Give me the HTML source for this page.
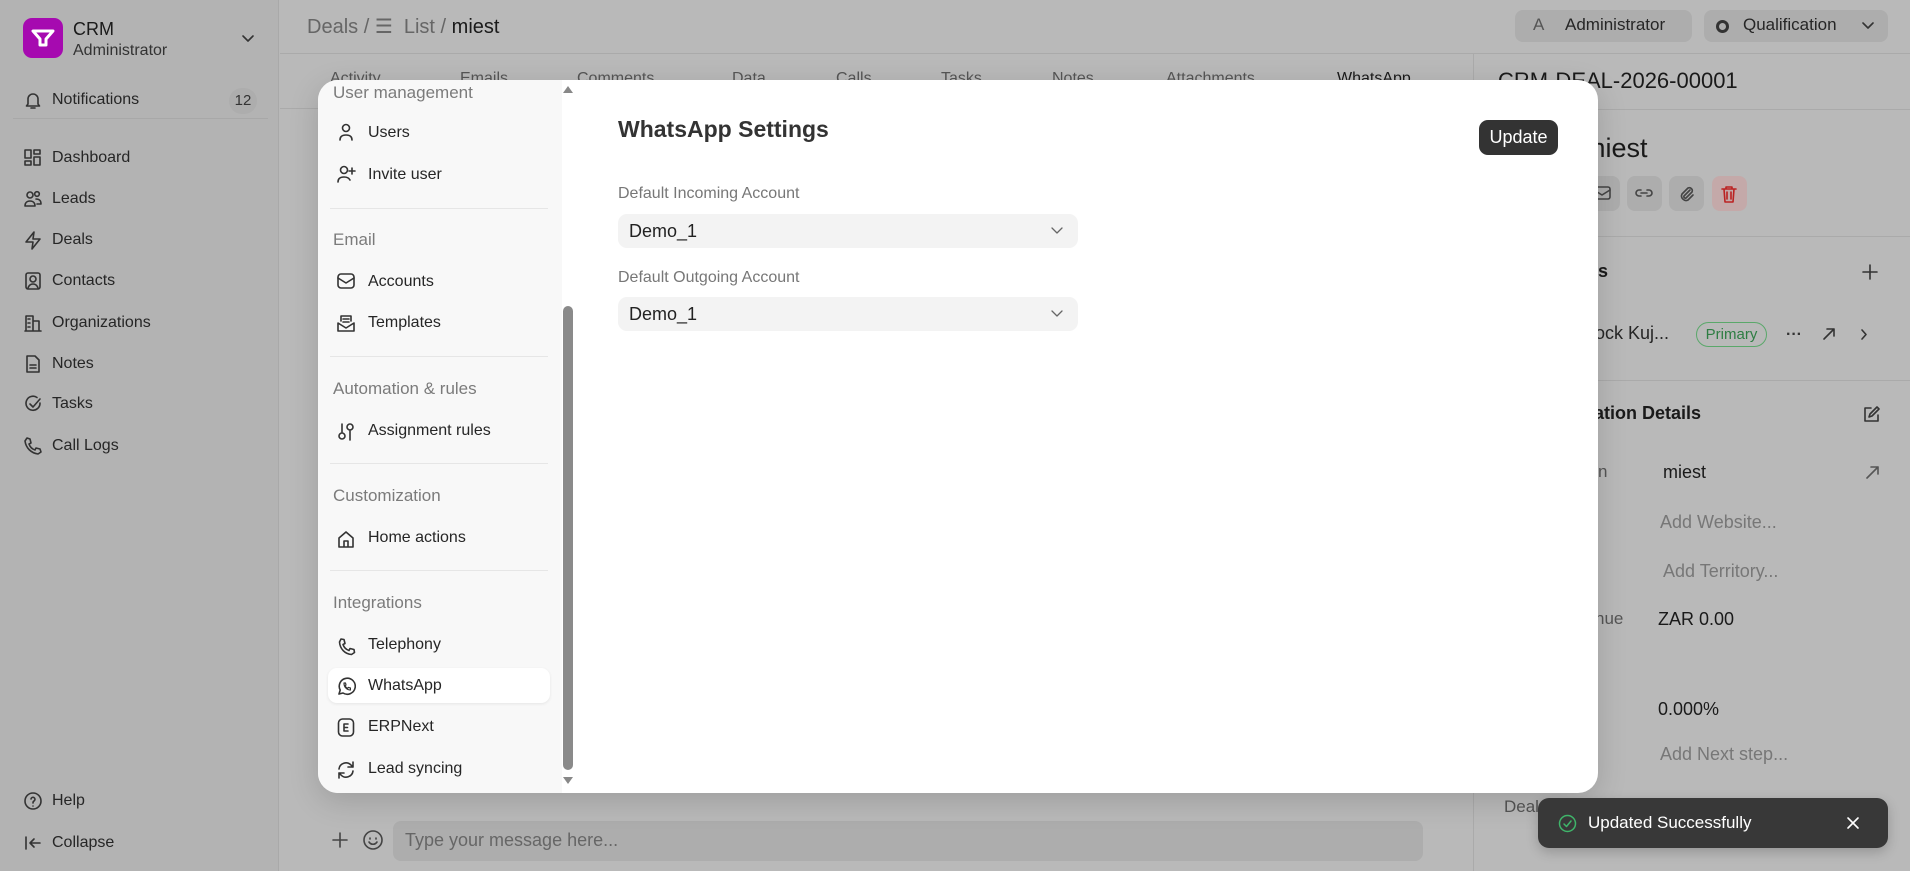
<!DOCTYPE html>
<html><head><meta charset="utf-8">
<style>
*{box-sizing:border-box;margin:0;padding:0}
body{width:1910px;height:871px;overflow:hidden;background:#b9b9b9;font-family:"Liberation Sans",sans-serif;color:#1f1f1f;position:relative}
.abs{position:absolute;white-space:nowrap}
svg{display:block}
.ic{position:absolute;fill:none;stroke:#333;stroke-width:1.6;stroke-linecap:round;stroke-linejoin:round}
.side{position:absolute;left:0;top:0;width:279px;height:871px;background:#b3b3b3;border-right:1px solid #a9a9a9}
.sn{font-size:16px;color:#262626}
.nav{position:absolute;left:318px;top:80px;width:244px;height:713px;background:#f8f8f8;border-radius:20px 0 0 20px;overflow:hidden}
.mi{font-size:16px;color:#262626}
.sec{font-size:17px;color:#7b7b7b}
.dv{position:absolute;left:12px;width:218px;height:1px;background:#e6e6e6}
.g{color:#777}
</style></head><body>
<div class="side">
  <div class="abs" style="left:23px;top:18px;width:40px;height:40px;border-radius:9px;background:#a60ab0"></div>
  <svg class="ic" style="left:31px;top:28px;stroke:#fff;stroke-width:3" width="24" height="20" viewBox="0 0 24 20"><path d="M2 3h20l-7 8v6h-6v-6z"/></svg>
  <div class="abs" style="left:73px;top:19px;font-size:18px;color:#1a1a1a">CRM</div>
  <div class="abs" style="left:73px;top:42px;font-size:16px;color:#333">Administrator</div>
  <svg class="ic" style="left:241px;top:34px" width="14" height="9" viewBox="0 0 14 9"><path d="M2 2l5 5 5-5"/></svg>
  <svg class="ic" style="left:23px;top:90px" width="20" height="20" viewBox="0 0 20 20"><path d="M5 14V9a5 5 0 0110 0v5l1.5 2h-13zM8 18h4"/></svg>
  <div class="abs sn" style="left:52px;top:91px">Notifications</div>
  <div class="abs" style="left:229px;top:88px;width:28px;height:26px;border-radius:13px;background:#adadad;font-size:15px;text-align:center;line-height:26px;color:#333">12</div>
  <div class="abs" style="left:13px;top:118px;width:255px;height:1px;background:#a8a8a8"></div>
  <svg class="ic" style="left:23px;top:148px" width="20" height="20" viewBox="0 0 20 20"><rect x="2" y="2" width="6" height="8"/><rect x="11" y="2" width="6" height="4"/><rect x="2" y="13" width="6" height="4"/><rect x="11" y="9" width="6" height="8"/></svg>
  <div class="abs sn" style="left:52px;top:149px">Dashboard</div>
  <svg class="ic" style="left:23px;top:189px" width="20" height="20" viewBox="0 0 20 20"><circle cx="7" cy="6" r="3"/><circle cx="14" cy="5" r="2.3"/><path d="M2 17c0-4 3-5 5-5s5 1 5 5zM13 10c3 0 5 1 5 5h-4"/></svg>
  <div class="abs sn" style="left:52px;top:190px">Leads</div>
  <svg class="ic" style="left:23px;top:230px" width="20" height="20" viewBox="0 0 20 20"><path d="M11 2L3 12h7l-1 7 8-10h-7z"/></svg>
  <div class="abs sn" style="left:52px;top:231px">Deals</div>
  <svg class="ic" style="left:23px;top:271px" width="20" height="20" viewBox="0 0 20 20"><rect x="3" y="2" width="14" height="16" rx="2"/><circle cx="10" cy="8" r="3"/><path d="M5 17c1-3 3-4 5-4s4 1 5 4"/></svg>
  <div class="abs sn" style="left:52px;top:272px">Contacts</div>
  <svg class="ic" style="left:23px;top:313px" width="20" height="20" viewBox="0 0 20 20"><path d="M3 18V3h7v15M10 8h6v10M2 18h16M5 6h2M5 10h2M5 14h2"/></svg>
  <div class="abs sn" style="left:52px;top:314px">Organizations</div>
  <svg class="ic" style="left:23px;top:354px" width="20" height="20" viewBox="0 0 20 20"><path d="M4 2h8l4 4v12H4zM7 11h6M7 14h6"/></svg>
  <div class="abs sn" style="left:52px;top:355px">Notes</div>
  <svg class="ic" style="left:23px;top:394px" width="20" height="20" viewBox="0 0 20 20"><path d="M17 9a7 7 0 11-3-5.5M7 10l3 3 7-8"/></svg>
  <div class="abs sn" style="left:52px;top:395px">Tasks</div>
  <svg class="ic" style="left:23px;top:436px" width="20" height="20" viewBox="0 0 20 20"><path d="M4 2l3 1 1 4-2 1c1 3 3 5 6 6l1-2 4 1 1 3-3 2C8 17 3 12 2 5z"/></svg>
  <div class="abs sn" style="left:52px;top:437px">Call Logs</div>
  <svg class="ic" style="left:23px;top:791px" width="20" height="20" viewBox="0 0 20 20"><circle cx="10" cy="10" r="8"/><path d="M8 8a2 2 0 113 2c-1 .5-1 1-1 2M10 15h0"/></svg>
  <div class="abs sn" style="left:52px;top:792px">Help</div>
  <svg class="ic" style="left:23px;top:833px" width="20" height="20" viewBox="0 0 20 20"><path d="M3 4v12M17 10H7M11 6l-4 4 4 4"/></svg>
  <div class="abs sn" style="left:52px;top:834px">Collapse</div>
</div>

<!-- header -->
<div class="abs" style="left:280px;top:53px;width:1630px;height:1px;background:#aaa"></div>
<div class="abs" style="left:307px;top:14px;font-size:20px;color:#666">Deals / <span style="color:#666">☰</span>&nbsp; List / <span style="color:#1a1a1a">miest</span></div>
<div class="abs" style="left:1515px;top:10px;width:177px;height:32px;border-radius:8px;background:#adadad"></div>
<div class="abs" style="left:1533px;top:15px;font-size:17px;color:#555">A</div>
<div class="abs" style="left:1565px;top:15px;font-size:17px;color:#262626">Administrator</div>
<div class="abs" style="left:1704px;top:10px;width:184px;height:32px;border-radius:8px;background:#adadad"></div>
<div class="abs" style="left:1716px;top:20px;width:13px;height:13px;border-radius:50%;border:3.5px solid #333"></div>
<div class="abs" style="left:1743px;top:15px;font-size:17px;color:#262626">Qualification</div>
<svg class="ic" style="left:1862px;top:22px" width="12" height="8" viewBox="0 0 12 8"><path d="M1 1l5 5 5-5"/></svg>
<!-- tabs -->
<div class="abs" style="left:280px;top:108px;width:1193px;height:1px;background:#aaa"></div>
<div class="abs" style="left:1473px;top:54px;width:1px;height:817px;background:#aaa"></div>
<div class="abs" style="left:330px;top:70px;font-size:16px;color:#555">Activity</div>
<div class="abs" style="left:460px;top:70px;font-size:16px;color:#555">Emails</div>
<div class="abs" style="left:577px;top:70px;font-size:16px;color:#555">Comments</div>
<div class="abs" style="left:732px;top:70px;font-size:16px;color:#555">Data</div>
<div class="abs" style="left:836px;top:70px;font-size:16px;color:#555">Calls</div>
<div class="abs" style="left:941px;top:70px;font-size:16px;color:#555">Tasks</div>
<div class="abs" style="left:1052px;top:70px;font-size:16px;color:#555">Notes</div>
<div class="abs" style="left:1166px;top:70px;font-size:16px;color:#555">Attachments</div>
<div class="abs" style="left:1337px;top:70px;font-size:16px;color:#1a1a1a">WhatsApp</div>
<div class="abs" style="left:1498px;top:68px;font-size:22px;color:#1a1a1a">CRM-DEAL-2026-00001</div>
<div class="abs" style="left:1474px;top:109px;width:436px;height:1px;background:#aaa"></div>

<!-- right panel -->
<div class="abs" style="left:1583px;top:133px;font-size:27px;color:#1a1a1a">miest</div>
<div class="abs" style="left:1585px;top:176px;width:35px;height:35px;border-radius:8px;background:#adadad"></div>
<svg class="ic" style="left:1592px;top:185px;stroke:#444" width="20" height="16" viewBox="0 0 20 16"><rect x="2" y="2" width="16" height="12" rx="2"/><path d="M2 5l8 5 8-5"/></svg>
<div class="abs" style="left:1627px;top:176px;width:35px;height:35px;border-radius:8px;background:#adadad"></div>
<svg class="ic" style="left:1634px;top:184px;stroke:#444" width="20" height="18" viewBox="0 0 20 18"><path d="M7 6H5a3 3 0 000 6h2M13 6h2a3 3 0 010 6h-2M7 9h6"/></svg>
<div class="abs" style="left:1669px;top:176px;width:35px;height:35px;border-radius:8px;background:#adadad"></div>
<svg class="ic" style="left:1676px;top:184px;stroke:#444" width="20" height="20" viewBox="0 0 20 20"><path d="M14 6l-6 6a1.5 1.5 0 002 2l6-6a3 3 0 00-4-4l-6 6a4.5 4.5 0 006 6l5-5"/></svg>
<div class="abs" style="left:1712px;top:176px;width:35px;height:35px;border-radius:8px;background:#c4a9a9"></div>
<svg class="ic" style="left:1719px;top:184px;stroke:#b22" width="20" height="20" viewBox="0 0 20 20"><path d="M3 5h14M7 5V3h6v2M5 5l1 13h8l1-13M8 8v7M12 8v7"/></svg>
<div class="abs" style="left:1474px;top:236px;width:436px;height:1px;background:#aaa"></div>
<div class="abs" style="left:1598px;top:261px;font-size:18px;font-weight:bold;color:#1a1a1a">s</div>
<svg class="ic" style="left:1862px;top:264px" width="16" height="16" viewBox="0 0 16 16"><path d="M8 1v14M1 8h14"/></svg>
<div class="abs" style="left:1591px;top:323px;font-size:18px;color:#262626">lock Kuj...</div>
<div class="abs" style="left:1696px;top:322px;width:71px;height:25px;border-radius:13px;border:1px solid #5aa86a;font-size:15px;color:#2e7d43;text-align:center;line-height:23px">Primary</div>
<div class="abs" style="left:1786px;top:326px;font-size:16px;font-weight:bold;color:#333">···</div>
<svg class="ic" style="left:1822px;top:327px" width="14" height="14" viewBox="0 0 14 14"><path d="M2 12L12 2M5 2h7v7"/></svg>
<svg class="ic" style="left:1860px;top:328px" width="8" height="13" viewBox="0 0 8 13"><path d="M2 2l4 4.5L2 11"/></svg>
<div class="abs" style="left:1474px;top:380px;width:436px;height:1px;background:#aaa"></div>
<div class="abs" style="left:1594px;top:403px;font-size:18px;font-weight:bold;color:#1a1a1a">ation Details</div>
<svg class="ic" style="left:1862px;top:406px" width="18" height="18" viewBox="0 0 18 18"><path d="M9 2H3v13h13V9M7 11l1-3 7-7 2 2-7 7z"/></svg>
<div class="abs" style="left:1598px;top:462px;font-size:17px;color:#555">n</div>
<div class="abs" style="left:1663px;top:462px;font-size:18px;color:#1a1a1a">miest</div>
<svg class="ic" style="left:1866px;top:466px;stroke:#555" width="13" height="13" viewBox="0 0 13 13"><path d="M1 12L12 1M5 1h7v7"/></svg>
<div class="abs g" style="left:1660px;top:512px;font-size:18px">Add Website...</div>
<div class="abs g" style="left:1663px;top:561px;font-size:18px">Add Territory...</div>
<div class="abs" style="left:1595px;top:609px;font-size:17px;color:#555">nue</div>
<div class="abs" style="left:1658px;top:609px;font-size:18px;color:#1a1a1a">ZAR 0.00</div>
<div class="abs" style="left:1658px;top:699px;font-size:18px;color:#1a1a1a">0.000%</div>
<div class="abs g" style="left:1660px;top:744px;font-size:18px">Add Next step...</div>
<div class="abs" style="left:1504px;top:797px;font-size:17px;color:#555">Deal</div>

<!-- chat bar -->
<svg class="ic" style="left:331px;top:831px;stroke:#444" width="18" height="18" viewBox="0 0 18 18"><path d="M9 2v14M2 9h14"/></svg>
<svg class="ic" style="left:362px;top:829px;stroke:#444" width="22" height="22" viewBox="0 0 22 22"><circle cx="11" cy="11" r="9"/><path d="M8 9v1M14 9v1M7 13c2 3 6 3 8 0"/></svg>
<div class="abs" style="left:393px;top:821px;width:1030px;height:40px;border-radius:8px;background:#adadad"></div>
<div class="abs" style="left:405px;top:830px;font-size:18px;color:#666">Type your message here...</div>

<!-- modal -->
<div class="abs" style="left:318px;top:80px;width:1280px;height:713px;background:#fff;border-radius:20px;box-shadow:0 8px 30px rgba(0,0,0,.15)"></div>
<div class="nav">
  <div class="abs sec" style="left:15px;top:3px">User management</div>
  <svg class="ic" style="left:19px;top:43px" width="18" height="18" viewBox="0 0 18 18"><circle cx="9" cy="5" r="3.5"/><path d="M3 17c0-4 3-5 6-5s6 1 6 5"/></svg>
  <div class="abs mi" style="left:50px;top:44px">Users</div>
  <svg class="ic" style="left:18px;top:85px" width="20" height="18" viewBox="0 0 20 18"><circle cx="8" cy="5" r="3.5"/><path d="M2 17c0-4 3-5 6-5s5 1 6 3M16 3v6M13 6h6"/></svg>
  <div class="abs mi" style="left:50px;top:86px">Invite user</div>
  <div class="dv" style="top:128px"></div>
  <div class="abs sec" style="left:15px;top:150px">Email</div>
  <svg class="ic" style="left:19px;top:193px" width="18" height="16" viewBox="0 0 18 16"><rect x="1" y="1" width="16" height="14" rx="3"/><path d="M1 5l8 5 8-5"/></svg>
  <div class="abs mi" style="left:50px;top:193px">Accounts</div>
  <svg class="ic" style="left:19px;top:234px" width="18" height="18" viewBox="0 0 18 18"><path d="M1 9l8 5 8-5v8H1zM4 7V2h10v5M6 5h6M6 8h6"/></svg>
  <div class="abs mi" style="left:50px;top:234px">Templates</div>
  <div class="dv" style="top:276px"></div>
  <div class="abs sec" style="left:15px;top:299px">Automation &amp; rules</div>
  <svg class="ic" style="left:19px;top:343px" width="18" height="18" viewBox="0 0 18 18"><path d="M5 1v8M13 8v9"/><circle cx="5" cy="13" r="3"/><circle cx="13" cy="4" r="3"/></svg>
  <div class="abs mi" style="left:50px;top:342px">Assignment rules</div>
  <div class="dv" style="top:383px"></div>
  <div class="abs sec" style="left:15px;top:406px">Customization</div>
  <svg class="ic" style="left:19px;top:450px" width="18" height="18" viewBox="0 0 18 18"><path d="M2 8l7-6 7 6v9H2zM7 17v-6h4v6"/></svg>
  <div class="abs mi" style="left:50px;top:449px">Home actions</div>
  <div class="dv" style="top:490px"></div>
  <div class="abs sec" style="left:15px;top:513px">Integrations</div>
  <svg class="ic" style="left:20px;top:558px" width="18" height="18" viewBox="0 0 18 18"><path d="M3 1l3 .5 1 4-2 1c1 3 3 5 6 6l1-2 4 1 .5 3-3 2C7 16 2 11 1.5 4z"/></svg>
  <div class="abs mi" style="left:50px;top:556px">Telephony</div>
  <div class="abs" style="left:10px;top:588px;width:222px;height:35px;border-radius:9px;background:#fff;box-shadow:0 1px 3px rgba(0,0,0,.08)"></div>
  <svg class="ic" style="left:19px;top:597px" width="19" height="19" viewBox="0 0 19 19"><path d="M2 17l1.2-4A8 8 0 116 16z"/><path d="M7 6l1.5 0 .5 2-1 .8c.6 1.3 1.4 2 2.6 2.6l.8-1 2 .5V13c-3.5 0-6.5-3-6.4-7z" stroke-width="1.2"/></svg>
  <div class="abs mi" style="left:50px;top:597px">WhatsApp</div>
  <svg class="ic" style="left:19px;top:638px" width="18" height="19" viewBox="0 0 18 19"><rect x="1.5" y="1" width="15" height="17" rx="4"/><path d="M11 6H7v7h4M7 9.5h3.5"/></svg>
  <div class="abs mi" style="left:50px;top:638px">ERPNext</div>
  <svg class="ic" style="left:18px;top:680px" width="20" height="20" viewBox="0 0 20 20"><path d="M3 9a7 7 0 0112-4l2 2M17 2v5h-5M17 11a7 7 0 01-12 4l-2-2M3 18v-5h5"/></svg>
  <div class="abs mi" style="left:50px;top:680px">Lead syncing</div>
</div>
<div class="abs" style="left:562px;top:80px;width:12px;height:713px;background:#fff"></div>
<div class="abs" style="left:562px;top:86px;width:0;height:0;border-left:5px solid transparent;border-right:5px solid transparent;border-bottom:7px solid #888;margin-left:1px"></div>
<div class="abs" style="left:563px;top:306px;width:10px;height:464px;border-radius:5px;background:#8a8a8a"></div>
<div class="abs" style="left:563px;top:777px;width:0;height:0;border-left:5px solid transparent;border-right:5px solid transparent;border-top:7px solid #888"></div>

<div class="abs" style="left:618px;top:116px;font-size:23px;font-weight:bold;color:#333">WhatsApp Settings</div>
<div class="abs" style="left:1479px;top:120px;width:79px;height:35px;border-radius:9px;background:#333;color:#fff;font-size:18px;text-align:center;line-height:35px">Update</div>
<div class="abs" style="left:618px;top:185px;font-size:16px;color:#777">Default Incoming Account</div>
<div class="abs" style="left:618px;top:214px;width:460px;height:34px;border-radius:9px;background:#f3f3f3"></div>
<div class="abs" style="left:629px;top:221px;font-size:18px;color:#222">Demo_1</div>
<svg class="ic" style="left:1051px;top:227px;stroke:#666;stroke-width:1.3" width="12" height="8" viewBox="0 0 12 8"><path d="M1 1l5 5 5-5"/></svg>
<div class="abs" style="left:618px;top:269px;font-size:16px;color:#777">Default Outgoing Account</div>
<div class="abs" style="left:618px;top:297px;width:460px;height:34px;border-radius:9px;background:#f3f3f3"></div>
<div class="abs" style="left:629px;top:304px;font-size:18px;color:#222">Demo_1</div>
<svg class="ic" style="left:1051px;top:310px;stroke:#666;stroke-width:1.3" width="12" height="8" viewBox="0 0 12 8"><path d="M1 1l5 5 5-5"/></svg>

<!-- toast -->
<div class="abs" style="left:1538px;top:798px;width:350px;height:50px;border-radius:11px;background:#383838;box-shadow:0 4px 12px rgba(0,0,0,.2)"></div>
<svg class="ic" style="left:1558px;top:814px;stroke:#3fb56a;stroke-width:1.5" width="19" height="19" viewBox="0 0 19 19"><circle cx="9.5" cy="9.5" r="8"/><path d="M6 10l2.5 2.5L13 7"/></svg>
<div class="abs" style="left:1588px;top:813px;font-size:17px;color:#fff">Updated Successfully</div>
<svg class="ic" style="left:1846px;top:816px;stroke:#fff" width="14" height="14" viewBox="0 0 14 14"><path d="M2 2l10 10M12 2L2 12"/></svg>
</body></html>
